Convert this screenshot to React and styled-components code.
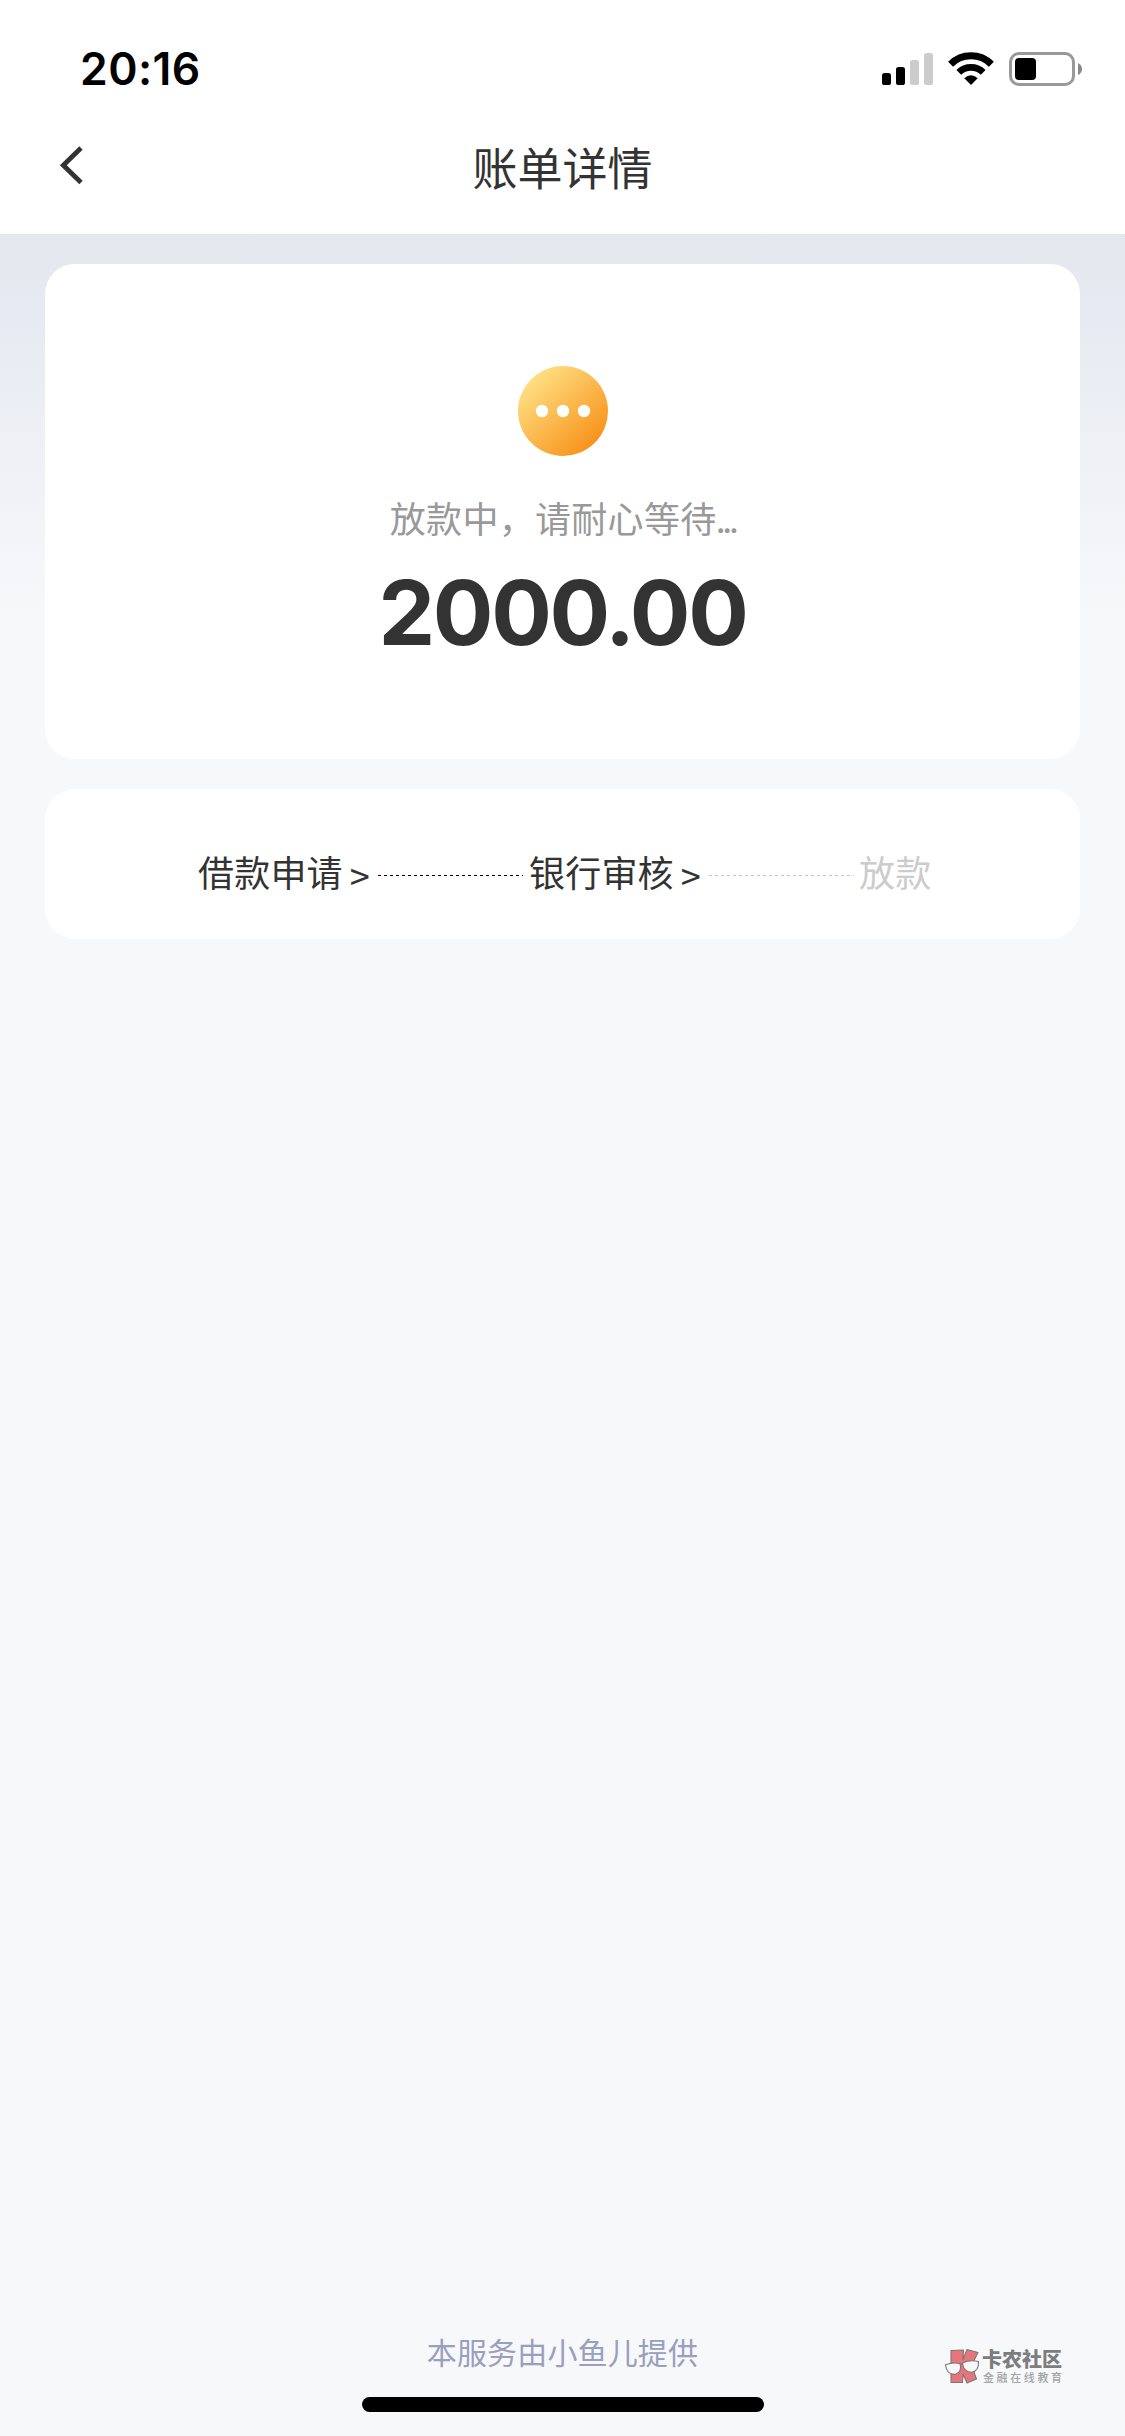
import React from "react";
import styled, { createGlobalStyle } from "styled-components";

const GlobalStyle = createGlobalStyle`
  * {
    box-sizing: border-box;
  }
  body {
    margin: 0;
    background: #f7f8fa;
  }
`;

const Page = styled.div`
  position: relative;
  display: flex;
  flex-direction: column;
  width: 1125px;
  height: 2436px;
  overflow: hidden;
  color: #333;
  font-family: "Inter", "Noto Sans CJK SC", sans-serif;
`;

const StatusBar = styled.div`
  display: flex;
  justify-content: space-between;
  height: 132px;
  padding: 42px 42px 0 80px;
  background: #fff;
`;

const Time = styled.div`
  height: 54px;
  line-height: 54px;
  font-size: 44.5px;
  font-weight: 600;
  letter-spacing: 0.4px;
  color: #000;
`;

const StatusIcons = styled.div`
  display: flex;
  align-items: flex-start;
  padding-top: 10px;

  svg {
    display: block;
  }
`;

const NavBar = styled.div`
  display: grid;
  grid-template-columns: 120px 1fr 120px;
  height: 102px;
  padding-bottom: 27px;
  align-items: center;
  background: #fff;
`;

const BackButton = styled.button`
  display: flex;
  padding: 0 0 10px 55.5px;
  border: none;
  background: none;
`;

const Title = styled.h1`
  margin: 0;
  font-size: 45px;
  line-height: 66px;
  font-weight: 400;
  text-align: center;
`;

const Content = styled.main`
  display: flex;
  flex: 1;
  flex-direction: column;
  gap: 30px;
  padding: 30px 45px 0;
  background: linear-gradient(#e4e7ee 0, #e7eaf2 80px, #f7f8fa 380px);
`;

const Card = styled.section`
  display: flex;
  align-items: center;
  border-radius: 30px;
  background: #fff;
`;

const ResultCard = styled(Card)`
  flex-direction: column;
  height: 495px;
  padding-top: 102px;
`;

const Tip = styled.p`
  margin: 37px 0 0;
  font-size: 36px;
  line-height: 54px;
  letter-spacing: 0.3px;
  color: #999;
`;

const Ellipsis = styled.span`
  margin-left: -1px;
  letter-spacing: -3.8px;
`;

const Amount = styled.div`
  margin-top: 12px;
  font-size: 90px;
  line-height: 108px;
  font-weight: 700;
  letter-spacing: -2.3px;
`;

const Point = styled.span`
  margin: 0 -3px;
`;

const StepsCard = styled(Card)`
  height: 150px;
  padding: 20px 0 0 153px;
`;

const Step = styled.span`
  display: flex;
  gap: 7px;
  width: ${(p) => (p.$last ? "auto" : "179px")};
  margin-left: ${(p) => (p.$last ? "-1px" : "0")};
  font-size: 36px;
  line-height: 54px;
  letter-spacing: 0.2px;
  color: ${(p) => (p.$pending ? "#ccc" : "#333")};
`;

const Arrow = styled.span`
  font-family: "Noto Sans CJK SC", sans-serif;
`;

const Dashes = styled.i`
  width: 145px;
  height: 1px;
  margin: 3px 6px 0 1px;
  background: linear-gradient(90deg, ${(p) => (p.$pending ? "#c4c4c4" : "#000")} 50%, transparent 50%) 0 0 / 6px 1px
    repeat-x;
`;

const Footer = styled.footer`
  display: flex;
  flex-direction: column;
  align-items: center;
  height: 106px;
  padding-top: 1px;
  background: #f7f8fa;
`;

const Provider = styled.div`
  font-size: 30px;
  line-height: 45px;
  letter-spacing: 0.15px;
  color: #999fbd;
`;

const HomeIndicator = styled.div`
  width: 402px;
  height: 15px;
  margin-top: 21px;
  border-radius: 8px;
  background: #000;
`;

// floats over the page in the corner
const Watermark = styled.div`
  position: absolute;
  left: 944px;
  top: 2347px;
  display: flex;
  gap: 2px;
  font-family: "Noto Sans CJK SC", sans-serif;
`;

const WatermarkText = styled.div`
  display: flex;
  flex-direction: column;
  white-space: nowrap;
`;

const WatermarkName = styled.span`
  font-size: 20px;
  line-height: 24px;
  font-weight: 900;
  color: #7c7d7f;
`;

const WatermarkSlogan = styled.span`
  padding-left: 1px;
  font-size: 11px;
  line-height: 13px;
  letter-spacing: 2.6px;
  font-weight: 500;
  color: #a2a3a5;
`;

const SignalIcon = () => (
  <svg width="52" height="34" viewBox="0 0 52 34">
    <rect x="0" y="21" width="9" height="12" rx="2.6" fill="#000" />
    <rect x="14" y="15" width="9" height="18" rx="2.6" fill="#000" />
    <rect x="28" y="8" width="9" height="25" rx="2.6" fill="#ccc" />
    <rect x="42" y="1" width="9" height="32" rx="2.6" fill="#ccc" />
  </svg>
);

const WifiIcon = styled(({ className }) => (
  <svg className={className} width="46" height="34" viewBox="0 0 46 34">
    <g fill="none" stroke="#000">
      <path d="M2.6 12.2A29 29 0 0 1 43.4 12.2" strokeWidth="7" />
      <path d="M10.8 20.4A17.5 17.5 0 0 1 35.2 20.4" strokeWidth="6.8" />
    </g>
    <path d="M16.3 26.2Q23 20.2 29.7 26.2L23 33Z" fill="#000" />
  </svg>
))`
  margin-left: 14px;
`;

const BatteryIcon = styled(({ className }) => (
  <svg className={className} width="74" height="36" viewBox="0 0 74 36">
    <rect x="1.5" y="1.5" width="63" height="31" rx="8.5" fill="none" stroke="#999" strokeWidth="3" />
    <rect x="6" y="6" width="21" height="22" rx="4" fill="#000" />
    <path d="M69 11Q73 13 73 17T69 23Z" fill="#888" />
  </svg>
))`
  margin-left: 15px;
`;

const BackIcon = () => (
  <svg width="30" height="40" viewBox="0 0 30 40">
    <path d="M25 3L7.3 20.2L25 37.5" fill="none" stroke="#333" strokeWidth="4.8" />
  </svg>
);

const PendingIcon = () => (
  <svg width="90" height="90" viewBox="0 0 90 90">
    <defs>
      <linearGradient id="pending" x1="0.15" y1="0.12" x2="0.85" y2="0.88">
        <stop offset="0" stopColor="#ffe084" />
        <stop offset="1" stopColor="#f7921a" />
      </linearGradient>
    </defs>
    <circle cx="45" cy="45" r="45" fill="url(#pending)" />
    <circle cx="24" cy="45" r="6.2" fill="#fff" />
    <circle cx="45" cy="45" r="6.2" fill="#fff" />
    <circle cx="66" cy="45" r="6.2" fill="#fff" />
  </svg>
);

const WatermarkLogo = () => (
  <svg width="36" height="38" viewBox="0 -1 36 38">
    <g stroke="#77787b" strokeWidth="1.1" strokeLinejoin="round">
      <path
        d="M7 2.5L19.5 2L19 11.5L23 1.5L34 4.5L27.5 17.5L32.5 31L23 35L19 26L18.5 34.5L7 34.5Z"
        fill="#e9757c"
      />
      <path d="M1.5 16.8Q8 14 16 15.5Q18.5 24 11.5 26.3Q2.5 27 1.5 16.8Z" fill="#f8f8f9" />
      <path d="M18.5 15Q26 11.5 34.5 13.5Q35 23 27.5 24.3Q19.5 24 18.5 15Z" fill="#f8f8f9" />
      <path d="M16 16.5L18.5 15.5" fill="none" />
    </g>
  </svg>
);

const App = () => {
  return (
    <>
      <GlobalStyle />
      <Page>
        <StatusBar>
          <Time>20:16</Time>
          <StatusIcons>
            <SignalIcon />
            <WifiIcon />
            <BatteryIcon />
          </StatusIcons>
        </StatusBar>
        <NavBar>
          <BackButton aria-label="返回">
            <BackIcon />
          </BackButton>
          <Title>账单详情</Title>
        </NavBar>
        <Content>
          <ResultCard>
            <PendingIcon />
            <Tip>
              放款中，请耐心等待<Ellipsis>...</Ellipsis>
            </Tip>
            <Amount>
              2000<Point>.</Point>00
            </Amount>
          </ResultCard>
          <StepsCard>
            <Step>
              借款申请<Arrow>&gt;</Arrow>
            </Step>
            <Dashes />
            <Step>
              银行审核<Arrow>&gt;</Arrow>
            </Step>
            <Dashes $pending />
            <Step $pending $last>放款</Step>
          </StepsCard>
        </Content>
        <Footer>
          <Provider>本服务由小鱼儿提供</Provider>
          <HomeIndicator />
        </Footer>
        <Watermark>
          <WatermarkLogo />
          <WatermarkText>
            <WatermarkName>卡农社区</WatermarkName>
            <WatermarkSlogan>金融在线教育</WatermarkSlogan>
          </WatermarkText>
        </Watermark>
      </Page>
    </>
  );
};

export default App;
